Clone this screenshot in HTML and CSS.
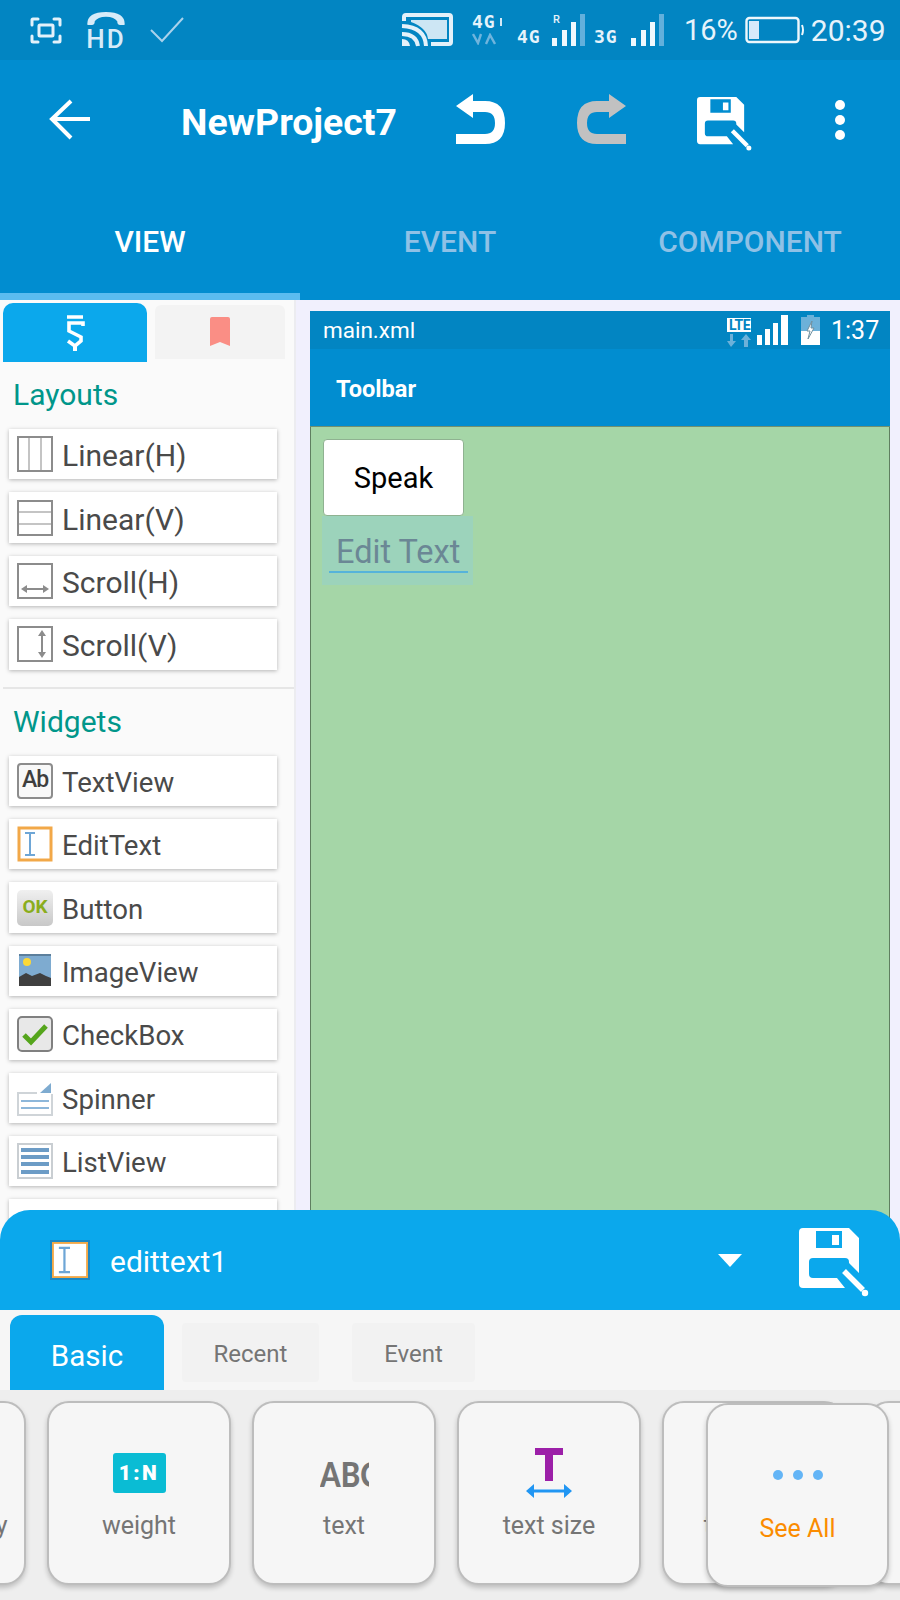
FILE: index.html
```html
<!DOCTYPE html>
<html lang="en">
<head>
<meta charset="utf-8">
<title>NewProject7</title>
<link rel="stylesheet" href="styles.css">
</head>
<body>
<svg class="defs" width="0" height="0">
  <defs>
    <symbol id="save" viewBox="0 0 70 70">
      <path fill="currentColor" fill-rule="evenodd" d="M4 0H50L60 10V45L50 35V34Q50 30 46 30H14Q10 30 10 34V46Q10 50 14 50H38L46 60H4Q0 60 0 56V4Q0 0 4 0ZM17 3V20H43V3ZM33 7H40V17H33Z"/>
      <path fill="none" stroke="currentColor" stroke-width="5.5" d="M45 43L64 62"/>
      <circle cx="66" cy="65" r="3.2" fill="currentColor"/>
    </symbol>
    <symbol id="edit" viewBox="0 0 36 36">
      <rect x="2" y="2" width="32" height="32" fill="#fff" stroke="#f2a848" stroke-width="3"/>
      <path fill="none" stroke="#6ea6d6" stroke-width="2" d="M8 7H18M13 7V29M8 29H18"/>
    </symbol>
  </defs>
</svg>
<main class="app">
  <header class="appbar">
    <div class="status">
      <svg class="st-shot" width="32" height="27" viewBox="0 0 32 27"><path fill="none" stroke="#e3f1fa" stroke-width="3" stroke-linecap="round" d="M2 8V3Q2 2 3 2H8M24 2H29Q30 2 30 3V8M30 19V24Q30 25 29 25H24M8 25H3Q2 25 2 24V19"/><rect x="9" y="8" width="14" height="11" rx="1" fill="none" stroke="#e3f1fa" stroke-width="3"/></svg>
      <div class="st-hd">
        <svg width="42" height="16" viewBox="0 0 42 16"><path fill="#d7ebf8" d="M1 14Q1 1 21 1T41 14Q41 15 39 15H36Q33 15 33 11Q30 6 21 6T9 11Q9 15 6 15H3Q1 15 1 14Z"/></svg>
        <span class="st-hd-text">HD</span>
      </div>
      <svg class="st-check" width="34" height="26" viewBox="0 0 34 26"><path fill="none" stroke="#a9d2ec" stroke-width="2" d="M1 13L12 24L33 1"/></svg>
      <svg class="st-cast" width="52" height="34" viewBox="0 0 52 34"><path fill="#e3f1fa" fill-rule="evenodd" d="M5 0H48Q52 0 52 4V29Q52 33 48 33H30V29H48V4H5V8H1V4Q1 0 5 0Z"/><path fill="#e3f1fa" d="M10 7H46V26H27Q26 15 10 9Z" opacity=".9"/><path fill="none" stroke="#e3f1fa" stroke-width="4" d="M1 13Q24 14 25 33M1 21Q15 21 17 33"/><path fill="#e3f1fa" d="M1 26Q8 26 9 33H1Z"/></svg>
      <div class="st-net">
        <div class="st-net-top"><span class="st-g">4G</span><i class="st-tick"></i></div>
        <svg width="24" height="12" viewBox="0 0 24 12"><path fill="none" stroke="#6fb4dd" stroke-width="2.4" d="M1 1L6 10L9 1M14 11L18 2L23 11"/></svg>
      </div>
      <span class="st-g st-g-a">4G</span>
      <div class="st-bars">
        <span class="st-r">R</span>
        <svg width="34" height="32" viewBox="0 0 34 32"><path fill="#f0f8fd" d="M0 24H5V32H0ZM10 16H15V32H10ZM19 8H24V32H19Z"/><path fill="#62b0dc" d="M28 0H33V32H28Z"/></svg>
      </div>
      <span class="st-g st-g-b">3G</span>
      <div class="st-bars st-bars-b">
        <svg width="34" height="32" viewBox="0 0 34 32"><path fill="#f0f8fd" d="M0 24H5V32H0ZM10 16H15V32H10ZM19 8H24V32H19Z"/><path fill="#62b0dc" d="M28 0H33V32H28Z"/></svg>
      </div>
      <span class="st-pct">16%</span>
      <svg class="st-batt" width="60" height="28" viewBox="0 0 60 28"><rect x="1.5" y="2" width="52" height="24" rx="3" fill="none" stroke="#eef7fc" stroke-width="2.4"/><rect x="4" y="5" width="10" height="18" fill="#d8eafa"/><path fill="none" stroke="#eef7fc" stroke-width="2" d="M57 9Q59 14 57 19"/></svg>
      <span class="st-time">20:39</span>
    </div>
    <div class="tools">
      <svg class="t-back" width="42" height="42" viewBox="0 0 42 42"><path fill="none" stroke="#fff" stroke-width="4" d="M41 20H5M22 2L3 20L22 39"/></svg>
      <h1 class="t-title">NewProject7</h1>
      <svg class="t-undo" width="52" height="52" viewBox="0 0 52 52"><path fill="#fff" d="M1 12L18 0V7H30Q50 7 50 29Q50 50 30 50H1V40H30Q40 40 40 29Q40 18 30 18H18V24Z"/></svg>
      <svg class="t-redo" width="52" height="52" viewBox="0 0 52 52"><path fill="#c1c1c1" d="M51 12L34 0V7H22Q2 7 2 29Q2 50 22 50H51V40H22Q12 40 12 29Q12 18 22 18H34V24Z"/></svg>
      <svg class="t-save" width="55" height="55"><use href="#save"/></svg>
      <div class="t-more"><i></i><i></i><i></i></div>
    </div>
    <nav class="tabs">
      <span class="tab tab-on">VIEW</span>
      <span class="tab">EVENT</span>
      <span class="tab">COMPONENT</span>
    </nav>
    <div class="indicator"></div>
  </header>

  <div class="workspace">
    <aside class="palette">
      <div class="pal-tabs">
        <div class="pal-tab pal-tab-on">
          <svg width="20" height="36" viewBox="0 0 20 36"><path fill="none" stroke="#fff" stroke-width="3.6" d="M2 2H18M18 11V8H4V16L16 22V26L10 31L3 26"/><path fill="#fff" d="M8 29H12V36H8Z"/></svg>
        </div>
        <div class="pal-tab">
          <svg width="20" height="30" viewBox="0 0 20 30"><path fill="#fa8e85" d="M2 0H18Q20 0 20 2V29L10 25L0 29V2Q0 0 2 0Z"/></svg>
        </div>
      </div>
      <h2 class="pal-head">Layouts</h2>
      <ul class="pal-list pal-list-lay">
        <li class="pal-item"><svg class="pal-ico" viewBox="0 0 36 36"><rect x="1" y="1" width="34" height="34" fill="#fff" stroke="#8c8c8c" stroke-width="2"/><path stroke="#c4c4c4" stroke-width="2" d="M12 2V34M24 2V34"/></svg>Linear(H)</li>
        <li class="pal-item"><svg class="pal-ico" viewBox="0 0 36 36"><rect x="1" y="1" width="34" height="34" fill="#fff" stroke="#8c8c8c" stroke-width="2"/><path stroke="#c4c4c4" stroke-width="2" d="M2 12H34M2 24H34"/></svg>Linear(V)</li>
        <li class="pal-item"><svg class="pal-ico" viewBox="0 0 36 36"><rect x="1" y="1" width="34" height="34" fill="#fff" stroke="#8c8c8c" stroke-width="2"/><path fill="none" stroke="#8c8c8c" stroke-width="2" d="M6 26H30"/><path fill="#8c8c8c" d="M4 26L10 22V30ZM32 26L26 22V30Z"/></svg>Scroll(H)</li>
        <li class="pal-item"><svg class="pal-ico" viewBox="0 0 36 36"><rect x="1" y="1" width="34" height="34" fill="#fff" stroke="#8c8c8c" stroke-width="2"/><path fill="none" stroke="#8c8c8c" stroke-width="2" d="M25 6V30"/><path fill="#8c8c8c" d="M25 4L21 10H29ZM25 32L21 26H29Z"/></svg>Scroll(V)</li>
      </ul>
      <hr class="pal-rule">
      <h2 class="pal-head pal-head-w">Widgets</h2>
      <ul class="pal-list pal-list-wid">
        <li class="pal-item"><span class="pal-ico ico-ab">Ab</span>TextView</li>
        <li class="pal-item"><svg class="pal-ico"><use href="#edit"/></svg>EditText</li>
        <li class="pal-item"><span class="pal-ico ico-ok">OK</span>Button</li>
        <li class="pal-item"><svg class="pal-ico" viewBox="0 0 36 36"><rect x="2" y="1" width="32" height="32" fill="#7eabd0"/><rect x="2" y="1" width="32" height="2" fill="#5c7f9c"/><circle cx="10" cy="9" r="4" fill="#fdd835"/><path fill="#3f3f3f" d="M2 33V24L9 20L15 23L23 20L29 23L34 25V33Z"/></svg>ImageView</li>
        <li class="pal-item"><svg class="pal-ico" viewBox="0 0 36 36"><rect x="1" y="1" width="34" height="34" rx="4" fill="#e8e8e8" stroke="#808080" stroke-width="2"/><path fill="none" stroke="#55a51c" stroke-width="5" d="M7 19L14 26L29 10"/></svg>CheckBox</li>
        <li class="pal-item"><svg class="pal-ico" viewBox="0 0 36 36"><rect x="1" y="13" width="34" height="22" fill="#fff" stroke="#cfd4d8" stroke-width="2"/><path fill="#fff" d="M20 8H36V14H20Z"/><path fill="#7eabd0" d="M34 3V13H23Z"/><path stroke="#8db7da" stroke-width="2" d="M4 21H32M4 28H32"/></svg>Spinner</li>
        <li class="pal-item"><svg class="pal-ico" viewBox="0 0 36 36"><rect x="1" y="1" width="34" height="34" fill="#fff" stroke="#c9ced2" stroke-width="2"/><path stroke="#6c9cc6" stroke-width="4" d="M4 7H32M4 14H32M4 21H32M4 29H32"/></svg>ListView</li>
        <li class="pal-item"></li>
      </ul>
    </aside>

    <section class="canvas">
      <div class="device">
        <div class="dev-status">
          <span class="dev-file">main.xml</span>
          <div class="dev-net">
            <span class="dev-lte">LTE</span>
            <svg width="24" height="13" viewBox="0 0 24 13"><path fill="#6cb1d9" d="M4 13L0 7H3V0H6V7H9ZM19 0L24 6H21V13H17V6H14Z"/></svg>
          </div>
          <svg class="dev-bars" width="33" height="30" viewBox="0 0 33 30"><path fill="#fff" d="M0 20H5V30H0ZM8 14H13V30H8ZM16 8H21V30H16ZM24 0H31V30H24Z"/></svg>
          <svg class="dev-batt" width="19" height="30" viewBox="0 0 19 30"><path fill="#6cb1d9" d="M6 0H13V2H19V16H0V2H6Z"/><path fill="#fff" d="M0 16H19V30H0Z"/><path fill="#fff" stroke="#6f8f9f" d="M11 6L6 16H9L7 24L13 13H10Z"/></svg>
          <span class="dev-time">1:37</span>
        </div>
        <div class="dev-toolbar">Toolbar</div>
        <div class="dev-body">
          <div class="dev-button">Speak</div>
          <div class="dev-edit"><span class="dev-edit-text">Edit Text</span></div>
        </div>
      </div>
    </section>
  </div>

  <section class="sheet">
    <div class="sheet-head">
      <svg class="sheet-ico"><use href="#edit"/></svg>
      <span class="sheet-name">edittext1</span>
      <span class="sheet-caret"></span>
      <svg class="sheet-save" width="70" height="70"><use href="#save"/></svg>
    </div>
    <div class="sheet-tabs">
      <span class="s-tab s-tab-on">Basic</span>
      <span class="s-tab s-tab-recent">Recent</span>
      <span class="s-tab s-tab-event">Event</span>
    </div>
    <div class="cards">
      <div class="card card-clip"><div class="card-icon"></div><span class="card-label">layout gravity</span></div>
      <div class="card"><div class="card-icon"><span class="ico-1n">1:N</span></div><span class="card-label">weight</span></div>
      <div class="card"><div class="card-icon"><span class="ico-abc"><span class="ico-abc-in">ABC</span></span></div><span class="card-label">text</span></div>
      <div class="card"><div class="card-icon"><svg width="46" height="50" viewBox="0 0 46 50"><path fill="#9c1fa8" d="M9 0H37V7H27V33H19V7H9Z"/><path fill="none" stroke="#2196f3" stroke-width="3" d="M6 43H40"/><path fill="#2196f3" d="M0 43L8 36V50ZM46 43L38 36V50Z"/></svg></div><span class="card-label">text size</span></div>
      <div class="card"><div class="card-icon"></div><span class="card-label">text style</span></div>
      <div class="card"></div>
    </div>
    <div class="see-all">
      <div class="see-dots"><i></i><i></i><i></i></div>
      <span class="see-label">See All</span>
    </div>
  </section>
</main>
</body>
</html>
```

FILE: styles.css
```css
* { box-sizing: border-box; }
html, body { margin: 0; padding: 0; }
body { width: 900px; height: 1600px; overflow: hidden; font-family: Roboto, "Liberation Sans", sans-serif; background: #f1f0fd; }
.defs { position: absolute; }
.app { position: relative; width: 900px; height: 1600px; overflow: hidden; }

/* App bar */
.appbar { position: relative; height: 300px; background: #018dd0; color: #fff; }
.status { display: flex; align-items: center; height: 60px; background: #0285c2; color: #e6f3fb; padding-left: 30px; }
.st-hd { display: flex; flex-direction: column; align-items: center; margin-left: 23px; width: 42px; height: 38px; }
.st-hd svg { display: block; }
.st-hd-text { font-size: 26px; line-height: 20px; font-weight: 500; letter-spacing: 2px; color: #d7ebf8; margin-top: 3px; white-space: nowrap; }
.st-check { margin-left: 23px; }
.st-cast { margin-left: 217px; }
.st-net { display: flex; flex-direction: column; margin-left: 19px; width: 34px; margin-top: -1px; }
.st-net-top { display: flex; align-items: center; height: 16px; }
.st-g { font-family: "DejaVu Sans Mono", monospace; font-weight: 700; font-size: 18px; line-height: 16px; letter-spacing: 1px; color: #e6f3fb; }
.st-tick { display: block; width: 2px; height: 8px; margin-left: 4px; background: #d4e9f6; }
.st-net svg { margin-top: 3px; }
.st-g-a { margin-left: 11px; margin-top: 13px; width: 26px; }
.st-bars { position: relative; margin-left: 9px; width: 34px; height: 32px; }
.st-bars svg { display: block; }
.st-bars-b { margin-left: 11px; }
.st-r { position: absolute; left: 1px; top: 0; font-size: 11px; line-height: 11px; font-weight: 500; color: #e6f3fb; }
.st-g-b { margin-left: 8px; margin-top: 13px; width: 26px; }
.st-pct { font-size: 29px; margin-left: 19px; font-weight: 400; }
.st-batt { margin-left: 7px; }
.st-time { font-size: 30px; font-weight: 400; margin-left: 6px; }

.tools { display: flex; align-items: center; height: 120px; padding-left: 49px; }
.t-title { margin: 4px 0 0 90px; width: 274px; font-size: 37.4px; font-weight: 700; line-height: 44px; white-space: nowrap; }
.t-undo { margin-left: 0; }
.t-redo { margin-left: 68px; }
.t-save { margin-left: 70px; margin-top: 8px; }
.t-more { display: flex; flex-direction: column; gap: 5px; margin-left: 83px; }
.t-more i { display: block; width: 10px; height: 10px; border-radius: 50%; background: #fff; }

.tabs { display: grid; grid-template-columns: repeat(3, 300px); height: 113px; align-items: center; padding-top: 9px; }
.tab { text-align: center; font-size: 30px; font-weight: 500; color: #8fc1e6; }
.tab-on { color: #fff; }
.indicator { position: absolute; left: 0; bottom: 0; width: 300px; height: 7px; background: #5abcf0; }

/* Workspace */
.workspace { display: flex; height: 1300px; }
.palette { width: 296px; height: 1300px; padding: 3px 0 0 0; background: #fafafa; border-right: 2px solid #ececf0; }
.pal-tabs { display: flex; align-items: flex-start; padding-left: 3px; gap: 8px; }
.pal-tab { display: flex; align-items: center; justify-content: center; width: 130px; height: 54px; margin-top: 2px; background: #f3f3f3; border-radius: 6px 6px 0 0; }
.pal-tab-on { width: 144px; height: 59px; margin-top: 0; background: #0ba8ec; border-radius: 10px 10px 0 0; }
.pal-head { margin: 14px 0 0 13px; font-size: 30px; font-weight: 400; line-height: 38px; color: #00968a; }
.pal-head-w { margin-top: 14px; }
.pal-list { list-style: none; margin: 15px 0 0 9px; padding: 0; display: flex; flex-direction: column; gap: 13px; }
.pal-list-lay { font-size: 30px; }
.pal-list-wid { font-size: 27.6px; margin-top: 15px; }
.pal-item { display: flex; align-items: center; gap: 9px; width: 268px; height: 50.4px; padding: 3px 0 0 8px; background: #fff; color: #4a4a4a; box-shadow: 0 1px 4px rgba(0, 0, 0, .28); }
.pal-ico { display: block; flex: none; width: 36px; height: 36px; margin-top: -3px; }
.ico-ab { border: 2px solid #8c8c8c; border-radius: 4px; font-size: 23px; font-weight: 500; line-height: 30px; text-align: center; color: #3e3e3e; background: #f8f8f8; letter-spacing: -1px; }
.ico-ok { border-radius: 5px; background: linear-gradient(#f0f0f0, #c8c8c8); font-size: 19px; font-weight: 700; line-height: 34px; text-align: center; color: #8aad1d; }
.pal-rule { height: 2px; margin: 17px 0 0 3px; border: 0; background: #e6e6e6; }

/* Canvas */
.canvas { flex: 1; padding: 11px 10px 0 14px; background: #f1f0fd; }
.device { display: flex; flex-direction: column; height: 1400px; background: #a5d6a7; }
.dev-status { display: flex; align-items: center; height: 38px; background: #0285c2; color: #fff; padding-left: 13px; }
.dev-file { font-size: 22.5px; width: 404px; }
.dev-net { display: flex; flex-direction: column; width: 24px; margin-top: 4px; }
.dev-net svg { display: block; margin-top: 2px; }
.dev-lte { font-size: 14px; line-height: 14px; font-weight: 700; color: #0285c2; background: #fff; padding: 0 2px; letter-spacing: -.5px; }
.dev-bars { margin-left: 6px; }
.dev-batt { margin-left: 11px; }
.dev-time { font-size: 25px; font-weight: 400; margin-left: 11px; }
.dev-toolbar { display: flex; align-items: center; height: 78px; padding: 2px 0 0 26px; background: #018dd0; border-bottom: 1px solid #6f9070; color: #fff; font-size: 23.6px; font-weight: 700; }
.dev-body { flex: 1; padding: 12px 0 0 12px; border-left: 1px solid #5f7f60; border-right: 1px solid #5f7f60; }
.dev-button { display: flex; align-items: center; justify-content: center; width: 141px; height: 77px; background: #fff; border: 1px solid #8fb291; border-radius: 4px; color: #000; font-size: 29px; }
.dev-edit { width: 151px; height: 69px; margin-left: -1px; padding: 10px 5px 0 7px; background: #9cd3bb; }
.dev-edit-text { display: block; height: 47px; padding: 4px 0 0 7px; font-size: 32.5px; line-height: 44px; color: #6b8795; border-bottom: 2px solid #56b3da; white-space: nowrap; }

/* Bottom sheet */
.sheet { position: absolute; left: 0; right: 0; bottom: 0; height: 390px; }
.sheet-head { display: flex; align-items: center; height: 100px; padding-left: 50px; background: #0ba8ec; border-radius: 30px 30px 0 0; color: #fff; }
.sheet-ico { flex: none; width: 40px; height: 40px; outline: 2px solid #1a88c4; outline-offset: -2px; }
.sheet-name { margin: 2px 0 0 20px; font-size: 30px; width: 608px; }
.sheet-caret { width: 0; height: 0; border-style: solid; border-width: 13px 12.5px 0; border-color: #fff transparent transparent; }
.sheet-save { margin-left: 57px; margin-top: 5px; }
.sheet-tabs { display: flex; align-items: flex-end; height: 80px; background: #f6f6f6; padding-left: 10px; }
.s-tab { display: flex; align-items: center; justify-content: center; height: 59px; margin-bottom: 8px; padding-top: 3px; background: #f2f2f2; border-radius: 4px; color: #757575; font-size: 24px; }
.s-tab-on { width: 154px; height: 75px; margin-bottom: 0; padding-top: 7px; background: #0ba8ec; color: #fff; border-radius: 12px 12px 0 0; font-size: 29.5px; }
.s-tab-recent { width: 137px; margin-left: 18px; }
.s-tab-event { width: 123px; margin-left: 33px; }
.cards { display: flex; gap: 21px; height: 210px; padding: 11px 0 0; background: #eee; overflow: hidden; margin-left: 0; }
.card { flex: none; display: flex; flex-direction: column; align-items: center; width: 184px; height: 184px; background: #f6f6f6; border: 2px solid #bdbdbd; border-radius: 22px; box-shadow: 0 3px 5px rgba(0, 0, 0, .2); }
.card-clip { margin-left: -158px; }
.card-icon { display: flex; align-items: center; justify-content: center; height: 50px; margin-top: 45px; }
.card-label { margin-top: 13px; font-size: 25px; line-height: 30px; color: #757575; white-space: nowrap; }
.ico-1n { display: block; width: 53px; height: 40px; border-radius: 3px; background: #0abcd4; color: #fff; font-size: 21px; font-weight: 900; line-height: 40px; text-align: center; letter-spacing: 2.5px; }
.ico-abc { display: block; width: 49px; height: 36px; overflow: hidden; }
.ico-abc-in { display: block; width: 90px; font-family: Lato, sans-serif; font-size: 35px; font-weight: 900; line-height: 36px; color: #757575; white-space: nowrap; transform: scaleX(.84); transform-origin: 0 0; }
.see-all { position: absolute; left: 706px; top: 193px; display: flex; flex-direction: column; align-items: center; width: 183px; height: 184px; background: #f6f6f6; border: 2px solid #bdbdbd; border-radius: 22px; box-shadow: 0 3px 5px rgba(0, 0, 0, .2); }
.see-dots { display: flex; gap: 10px; margin-top: 65px; }
.see-dots i { display: block; width: 10px; height: 10px; border-radius: 50%; background: #64b5f6; }
.see-label { margin-top: 34px; font-size: 25px; line-height: 30px; color: #fb8c00; }
```
